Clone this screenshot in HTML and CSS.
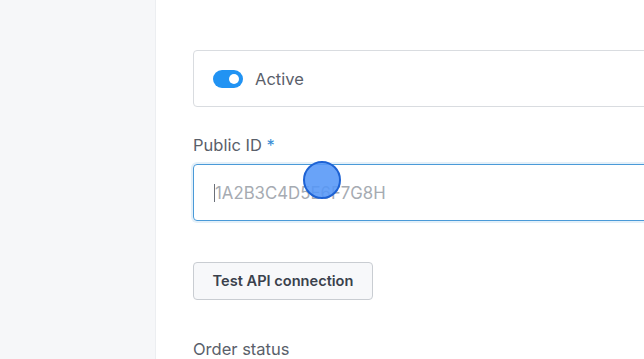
FILE: index.html
```html
<!DOCTYPE html>
<html lang="en">
<head>
<meta charset="utf-8">
<link rel="stylesheet" href="styles.css">
</head>
<body>
<div class="layout">
  <aside class="sidebar"></aside>
  <main class="main">
    <div class="card">
      <span class="toggle"><span class="knob"></span></span>
      <span class="card-label">Active</span>
    </div>
    <div class="field-label">Public ID <span class="req">*</span></div>
    <div class="input">
      <span class="caret"></span>
      <span class="placeholder">1A2B3C4D5E6F7G8H</span>
      <span class="click-dot"></span>
    </div>
    <button class="btn">Test API connection</button>
    <div class="field-label section">Order status</div>
  </main>
</div>
</body>
</html>
```

FILE: styles.css
```css
html, body {
  margin: 0;
  padding: 0;
  background: #ffffff;
  font-family: Inter, "Noto Sans", "Liberation Sans", sans-serif;
  overflow: hidden;
}
.layout {
  display: flex;
  height: 359px;
  overflow: hidden;
}
.sidebar {
  width: 155px;
  flex: none;
  background: #f6f7f9;
  border-right: 1px solid #eceef1;
}
.main {
  flex: 1;
  padding: 50px 0 0 37px;
  min-width: 0;
  overflow: hidden;
}
.card {
  box-sizing: border-box;
  height: 57px;
  margin-right: -20px;
  border: 1px solid #d9dce0;
  border-radius: 4px;
  display: flex;
  align-items: center;
  padding-left: 19px;
  gap: 12px;
}
.toggle {
  position: relative;
  width: 30px;
  height: 18px;
  border-radius: 9px;
  background: #2193f3;
  flex: none;
}
.knob {
  position: absolute;
  right: 4px;
  top: 4px;
  width: 10px;
  height: 10px;
  border-radius: 50%;
  background: #ffffff;
}
.card-label {
  font-size: 16.5px;
  color: #5a606a;
}
.field-label {
  margin-top: 26px;
  font-size: 16.5px;
  line-height: 24px;
  color: #5a606a;
}
.req {
  color: #3b8fd6;
}
.input {
  position: relative;
  box-sizing: border-box;
  margin-top: 7px;
  height: 57px;
  margin-right: -20px;
  border: 1px solid #4a9ad8;
  border-radius: 4px;
  box-shadow: 0 0 0 2px rgba(74, 154, 216, 0.15);
  display: flex;
  align-items: center;
  padding-left: 20px;
}
.caret {
  width: 1px;
  height: 18px;
  background: #6b7079;
}
.placeholder {
  font-size: 16.8px;
  color: #a6abb2;
}
.click-dot {
  position: absolute;
  left: 109px;
  top: -4px;
  width: 34px;
  height: 34px;
  border-radius: 50%;
  background: rgba(84, 150, 247, 0.88);
  border: 2px solid #1d62d4;
}
.btn {
  display: block;
  margin-top: 41px;
  box-sizing: border-box;
  width: 180px;
  height: 38px;
  background: #f7f8fa;
  border: 1px solid #c9cdd2;
  border-radius: 4px;
  font-family: Inter, "Noto Sans", "Liberation Sans", sans-serif;
  font-size: 14.6px;
  font-weight: 600;
  color: #3a414c;
  padding: 0;
}
.field-label.section {
  margin-top: 37px;
}
```
